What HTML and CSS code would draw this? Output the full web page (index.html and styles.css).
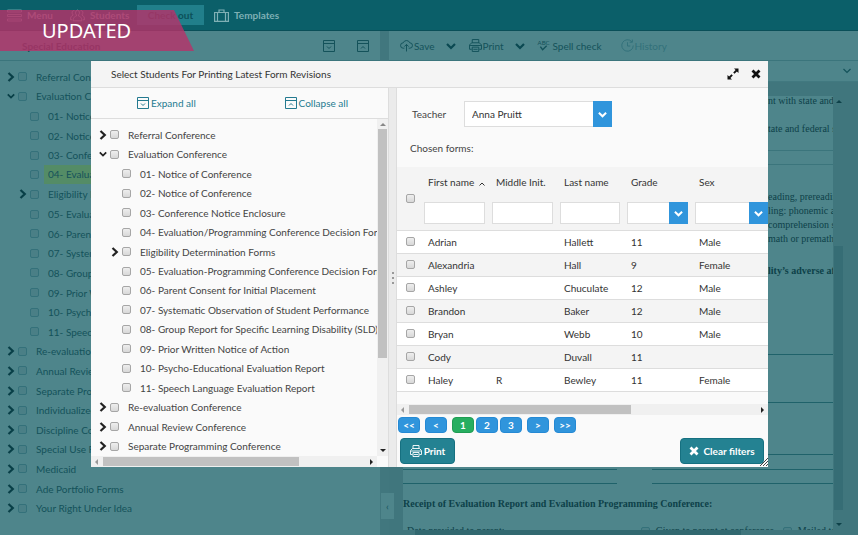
FILE: index.html
```html
<!DOCTYPE html>
<html lang="en">
<head>
<meta charset="utf-8">
<title>Special Education</title>
<link rel="stylesheet" href="styles.css">
</head>
<body>
<svg class="sprite" aria-hidden="true">
  <symbol id="right" viewBox="0 0 8 10"><path d="M1.5 1 5.8 5 1.5 9" fill="none" stroke="currentColor" stroke-width="2.2"/></symbol>
  <symbol id="down" viewBox="0 0 10 8"><path d="M1 2 5 6 9 2" fill="none" stroke="currentColor" stroke-width="2.2"/></symbol>
  <symbol id="thin-down" viewBox="0 0 10 8"><path d="M1.5 2 5 5.5 8.5 2" fill="none" stroke="currentColor" stroke-width="1.2"/></symbol>
  <symbol id="box-down" viewBox="0 0 12 12"><path d="M.5.5h11v11H.5zM.5 3.5h11M4 6.5l2 2 2-2" fill="none" stroke="currentColor"/></symbol>
  <symbol id="box-up" viewBox="0 0 12 12"><path d="M.5.5h11v11H.5zM.5 3.5h11M4 8.500l2-2 2 2" fill="none" stroke="currentColor"/></symbol>
  <symbol id="printer" viewBox="0 0 12 12"><path d="M3 3.500v-3h6v3M2.500 9.500h-2v-4l2-2h7l2 2v4h-2M1 6h10M3 7.500h6v4H3zM4 9.500h4" fill="none" stroke="currentColor" stroke-width=".9"/></symbol>
  <symbol id="cloud" viewBox="0 0 12 12"><path d="M4 8.500H3a2.500 2.500 0 0 1 0-5 3.200 3.200 0 0 1 6 0 2.500 2.500 0 0 1 0 5H8M6 11.500V5M4 7l2-2 2 2" fill="none" stroke="currentColor" stroke-width=".9"/></symbol>
  <symbol id="clock" viewBox="0 0 12 12"><path d="M10 2.500A5.300 5.300 0 1 0 11.300 6M10.500.5v2.500H8M6 3v3.500h2.500" fill="none" stroke="currentColor" stroke-width=".9"/></symbol>
  <symbol id="cross" viewBox="0 0 10 10"><path d="M1.500 1.500l7 7M8.500 1.500l-7 7" fill="none" stroke="currentColor" stroke-width="2.800"/></symbol>
  <symbol id="expand" viewBox="0 0 12 12"><path d="M7 .5h4.500V5L9.900 3.400 7.500 5.800 6.200 4.500 8.600 2.100zM5 11.500H.5V7l1.600 1.600 2.400-2.400 1.300 1.300-2.400 2.400z" fill="currentColor"/></symbol>
  <symbol id="menu" viewBox="0 0 15 13"><path d="M.5 1h14v2H.5zM.5 5.500h14v2H.5zM.5 10h14v2H.5z" fill="none" stroke="currentColor" stroke-width=".8"/></symbol>
  <symbol id="people" viewBox="0 0 14 12"><path d="M7 1a2 2.500 0 0 1 1 4.500v1c1.500.6 3 1 3 4.500H3c0-3.500 1.500-3.900 3-4.500v-1A2 2.500 0 0 1 7 1zM4 1.500C1.500 1 1.500 4.500 3 5.500 1 6.500.5 7.500.5 10H2M10 1.500c2.500-.5 2.500 3 1 4 2 1 2.500 2 2.500 4.500H12" fill="none" stroke="currentColor" stroke-width=".9"/></symbol>
  <symbol id="case" viewBox="0 0 15 13"><path d="M.6 3.500H14.400v8.900H.6zM5 3.500V1h5v2.500M3.500 3.500v9M11.500 3.500v9" fill="none" stroke="currentColor" stroke-width="1.200"/></symbol>
  <symbol id="tick" viewBox="0 0 10 6"><path d="M1.500 1.500 4 4.800 8.500.5" fill="none" stroke="currentColor" stroke-width="1.500"/></symbol>
</svg>

<div class="app">
  <nav class="topbar">
    <a class="nav menu" href="#"><svg class="i15"><use href="#menu"/></svg>Menu</a>
    <a class="nav students" href="#"><svg class="i15"><use href="#people"/></svg>Students</a>
    <a class="nav current" href="#">Check out</a>
    <a class="nav" href="#"><svg class="i15"><use href="#case"/></svg>Templates</a>
  </nav>
  <div class="workspace">
    <aside class="side">
      <header class="side-head">
        <h2>Special Education</h2>
        <button class="plain" aria-label="Expand all"><svg class="i12"><use href="#box-down"/></svg></button>
        <button class="plain" aria-label="Collapse all"><svg class="i12"><use href="#box-up"/></svg></button>
      </header>
      <ul class="tree">
        <li><svg class="tw"><use href="#right"/></svg><label><input type="checkbox"><span>Referral Conference</span></label></li>
        <li><svg class="tw"><use href="#down"/></svg><label><input type="checkbox"><span>Evaluation Conference</span></label></li>
        <li class="sub"><label><input type="checkbox"><span>01- Notice of Conference</span></label></li>
        <li class="sub"><label><input type="checkbox"><span>02- Notice of Conference</span></label></li>
        <li class="sub"><label><input type="checkbox"><span>03- Conference Notice</span></label></li>
        <li class="sub marked"><label><input type="checkbox"><span>04- Evaluation</span></label></li>
        <li class="sub"><svg class="tw"><use href="#right"/></svg><label><input type="checkbox"><span>Eligibility Forms</span></label></li>
        <li class="sub"><label><input type="checkbox"><span>05- Evaluation</span></label></li>
        <li class="sub"><label><input type="checkbox"><span>06- Parent Consent</span></label></li>
        <li class="sub"><label><input type="checkbox"><span>07- Systematic</span></label></li>
        <li class="sub"><label><input type="checkbox"><span>08- Group Report</span></label></li>
        <li class="sub"><label><input type="checkbox"><span>09- Prior Written</span></label></li>
        <li class="sub"><label><input type="checkbox"><span>10- Psycho-Educational</span></label></li>
        <li class="sub"><label><input type="checkbox"><span>11- Speech Language</span></label></li>
        <li><svg class="tw"><use href="#right"/></svg><label><input type="checkbox"><span>Re-evaluation</span></label></li>
        <li><svg class="tw"><use href="#right"/></svg><label><input type="checkbox"><span>Annual Review</span></label></li>
        <li><svg class="tw"><use href="#right"/></svg><label><input type="checkbox"><span>Separate Programming</span></label></li>
        <li><svg class="tw"><use href="#right"/></svg><label><input type="checkbox"><span>Individualized</span></label></li>
        <li><svg class="tw"><use href="#right"/></svg><label><input type="checkbox"><span>Discipline Conference</span></label></li>
        <li><svg class="tw"><use href="#right"/></svg><label><input type="checkbox"><span>Special Use Forms</span></label></li>
        <li><svg class="tw"><use href="#right"/></svg><label><input type="checkbox"><span>Medicaid</span></label></li>
        <li><svg class="tw"><use href="#right"/></svg><label><input type="checkbox"><span>Ade Portfolio Forms</span></label></li>
        <li><svg class="tw"><use href="#right"/></svg><label><input type="checkbox"><span>Your Right Under Idea</span></label></li>
      </ul>
    </aside>
    <div class="gutter"><button class="handle" aria-label="Hide panel">‹</button></div>
    <main class="editor">
      <div class="tools">
        <button class="plain save"><svg class="i13"><use href="#cloud"/></svg>Save</button>
        <button class="plain drop" aria-label="Save options"><svg class="i10"><use href="#down"/></svg></button>
        <button class="plain"><svg class="i13"><use href="#printer"/></svg>Print</button>
        <button class="plain drop" aria-label="Print options"><svg class="i10"><use href="#down"/></svg></button>
        <button class="plain spell"><span class="abc">ABC<svg><use href="#tick"/></svg></span>Spell check</button>
        <button class="plain faint"><svg class="i13"><use href="#clock"/></svg>History</button>
      </div>
      <div class="formbar"><svg class="i10"><use href="#thin-down"/></svg></div>
      <div class="canvas">
        <div class="page">
          <p class="edge first">nt with state and</p>
          <p class="edge second">tate and federal s</p>
          <hr class="light"><hr class="light near">
          <div class="skills">
            <p class="edge">eading, prereading</p>
            <p class="edge">ling: phonemic aw</p>
            <p class="edge">comprehension sk</p>
            <p class="edge">math or premath sk</p>
          </div>
          <p class="edge adverse">lity’s adverse affect</p>
          <hr class="r1"><hr class="r2"><hr class="r3">
          <div class="sign"><hr><hr></div>
          <div class="sign"><hr><hr></div>
          <h3>Receipt of Evaluation Report and Evaluation Programming Conference:</h3>
          <div class="receipt">
            <span>Date provided to parent:</span>
            <label><input type="checkbox">Given to parent at conference</label>
            <label><input type="checkbox">Mailed to</label>
          </div>
        </div>
        <div class="page-bar"><i class="up"></i><b></b><i class="dn"></i></div>
        <div class="page-hbar"><b></b></div>
      </div>
    </main>
  </div>
</div>

<div class="ribbon">UPDATED</div>

<div class="overlay">
  <section class="dialog" role="dialog" aria-labelledby="dlg">
    <header class="dialog-head">
      <h1 id="dlg">Select Students For Printing Latest Form Revisions</h1>
      <button class="plain" aria-label="Maximize"><svg class="i12"><use href="#expand"/></svg></button>
      <button class="plain" aria-label="Close"><svg class="i10"><use href="#cross"/></svg></button>
    </header>
    <div class="dialog-body">
      <div class="forms">
        <div class="forms-tools">
          <button class="plain"><svg class="i12"><use href="#box-down"/></svg>Expand all</button>
          <button class="plain"><svg class="i12"><use href="#box-up"/></svg>Collapse all</button>
        </div>
        <div class="forms-scroll">
          <ul class="tree">
            <li><svg class="tw"><use href="#right"/></svg><label><input type="checkbox"><span>Referral Conference</span></label></li>
            <li><svg class="tw"><use href="#down"/></svg><label><input type="checkbox"><span>Evaluation Conference</span></label></li>
            <li class="sub"><label><input type="checkbox"><span>01- Notice of Conference</span></label></li>
            <li class="sub"><label><input type="checkbox"><span>02- Notice of Conference</span></label></li>
            <li class="sub"><label><input type="checkbox"><span>03- Conference Notice Enclosure</span></label></li>
            <li class="sub"><label><input type="checkbox"><span>04- Evaluation/Programming Conference Decision Form</span></label></li>
            <li class="sub"><svg class="tw"><use href="#right"/></svg><label><input type="checkbox"><span>Eligibility Determination Forms</span></label></li>
            <li class="sub"><label><input type="checkbox"><span>05- Evaluation-Programming Conference Decision Form</span></label></li>
            <li class="sub"><label><input type="checkbox"><span>06- Parent Consent for Initial Placement</span></label></li>
            <li class="sub"><label><input type="checkbox"><span>07- Systematic Observation of Student Performance</span></label></li>
            <li class="sub"><label><input type="checkbox"><span>08- Group Report for Specific Learning Disability (SLD)</span></label></li>
            <li class="sub"><label><input type="checkbox"><span>09- Prior Written Notice of Action</span></label></li>
            <li class="sub"><label><input type="checkbox"><span>10- Psycho-Educational Evaluation Report</span></label></li>
            <li class="sub"><label><input type="checkbox"><span>11- Speech Language Evaluation Report</span></label></li>
            <li><svg class="tw"><use href="#right"/></svg><label><input type="checkbox"><span>Re-evaluation Conference</span></label></li>
            <li><svg class="tw"><use href="#right"/></svg><label><input type="checkbox"><span>Annual Review Conference</span></label></li>
            <li><svg class="tw"><use href="#right"/></svg><label><input type="checkbox"><span>Separate Programming Conference</span></label></li>
          </ul>
          <div class="vbar"><i class="up"></i><b></b><i class="dn"></i></div>
        </div>
        <div class="hbar"><i class="lf"></i><b></b><i class="rt"></i></div>
      </div>
      <div class="splitter"><i></i><i></i><i></i></div>
      <div class="students-pane">
        <div class="teacher">
          <label for="teacher">Teacher</label>
          <span class="pick"><select id="teacher"><option>Anna Pruitt</option></select><svg><use href="#down"/></svg></span>
        </div>
        <p class="chosen">Chosen forms:</p>
        <div class="grid">
          <table>
            <colgroup><col class="c0"><col class="cb"><col class="cb"><col class="ca"><col class="cb"><col></colgroup>
            <thead>
              <tr>
                <th><input type="checkbox" aria-label="Select all"></th>
                <th><label for="f1">First name <svg class="sort" viewBox="0 0 6 4"><path d="M.5 3.500 3 1l2.500 2.500" fill="none" stroke="currentColor"/></svg></label><input type="text" id="f1"></th>
                <th><label for="f2">Middle Init.</label><input type="text" id="f2"></th>
                <th><label for="f3">Last name</label><input type="text" id="f3"></th>
                <th><label for="f4">Grade</label><span class="pick"><select id="f4"><option></option></select><svg><use href="#down"/></svg></span></th>
                <th class="last"><label for="f5">Sex</label><span class="pick"><select id="f5"><option></option></select><svg><use href="#down"/></svg></span></th>
              </tr>
            </thead>
            <tbody>
              <tr><td><input type="checkbox" aria-label="Adrian Hallett"></td><td>Adrian</td><td></td><td>Hallett</td><td>11</td><td>Male</td></tr>
              <tr><td><input type="checkbox" aria-label="Alexandria Hall"></td><td>Alexandria</td><td></td><td>Hall</td><td>9</td><td>Female</td></tr>
              <tr><td><input type="checkbox" aria-label="Ashley Chuculate"></td><td>Ashley</td><td></td><td>Chuculate</td><td>12</td><td>Male</td></tr>
              <tr><td><input type="checkbox" aria-label="Brandon Baker"></td><td>Brandon</td><td></td><td>Baker</td><td>12</td><td>Male</td></tr>
              <tr><td><input type="checkbox" aria-label="Bryan Webb"></td><td>Bryan</td><td></td><td>Webb</td><td>10</td><td>Male</td></tr>
              <tr><td><input type="checkbox" aria-label="Cody Duvall"></td><td>Cody</td><td></td><td>Duvall</td><td>11</td><td></td></tr>
              <tr><td><input type="checkbox" aria-label="Haley Bewley"></td><td>Haley</td><td>R</td><td>Bewley</td><td>11</td><td>Female</td></tr>
            </tbody>
          </table>
        </div>
        <div class="hbar wide"><i class="lf"></i><b></b><i class="rt"></i></div>
        <div class="pager">
          <button>&lt;&lt;</button><button>&lt;</button>
          <span class="numbers"><button class="on">1</button><button>2</button><button>3</button></span>
          <button>&gt;</button><button>&gt;&gt;</button>
        </div>
        <footer class="actions">
          <button class="action"><svg class="i12"><use href="#printer"/></svg>Print</button>
          <button class="action clear"><svg class="i10"><use href="#cross"/></svg>Clear filters</button>
        </footer>
      </div>
    </div>
    <svg class="grip" viewBox="0 0 8 8"><path d="M0 8 8 0M3 8l5-5M6 8l2-2" stroke="#444" fill="none"/></svg>
  </section>
</div>
</body>
</html>
```
FILE: styles.css
```css
* { box-sizing: border-box; }
html, body { height: 100%; margin: 0; overflow: hidden; }
body { font: 10px/14px Lato, "Open Sans", sans-serif; color: #444; background: #4e858b; }
h1, h2, h3, p, ul { margin: 0; padding: 0; font-size: inherit; font-weight: inherit; }
ul { list-style: none; }
a { color: inherit; text-decoration: none; }
button, input, select { font: inherit; color: inherit; margin: 0; }
hr { border: 0; height: 1px; margin: 0; background: #1f626a; }
svg { flex: none; display: block; }
.sprite { position: absolute; width: 0; height: 0; }
.i10 { width: 10px; height: 10px; }
.i12 { width: 12px; height: 12px; }
.i13 { width: 13px; height: 13px; }
.i15 { width: 15px; height: 13px; }
.plain { display: flex; align-items: center; gap: 1px; padding: 0; border: 0; background: none; white-space: nowrap; }
input[type=checkbox] {
  appearance: none; flex: none; width: 9px; height: 9px;
  border: 1px solid #a6a6a6; border-radius: 2px;
  background: linear-gradient(#eee, #d8d8d8);
}

/* Application behind the dialog */
.app { height: 100%; display: flex; flex-direction: column; color: #14525a; }
.app input[type=checkbox] { border-color: #34717a; background: #4a7f86; }
.topbar { flex: none; height: 31px; display: flex; align-items: center; padding-left: 7px; background: #0b5f69; border-bottom: 1px solid #0a4f58; color: #7fb0b5; font-weight: bold; }
.nav { display: flex; align-items: center; gap: 5px; }
.menu { width: 63px; }
.students { width: 67px; }
.current { height: 20px; width: 67px; justify-content: center; margin-right: 10px; background: #217f8b; color: #0b5059; }
.workspace { flex: 1; min-height: 0; display: flex; }
.side { flex: 0 0 380px; display: flex; flex-direction: column; min-width: 0; background: #4e858b; }
.side-head { flex: none; height: 30px; display: flex; align-items: center; gap: 22px; padding: 0 11px 0 22px; border-bottom: 1px solid #3b757c; }
.side-head h2 { flex: 1; font-weight: bold; color: #0d4951; }
.side .tree { padding: 6px 0 17px 7px; }
.tree { flex: 1; min-width: 0; min-height: 0; display: flex; flex-direction: column; overflow: hidden; }
.tree li { flex: 1; min-height: 0; display: flex; align-items: center; padding-left: 11px; white-space: nowrap; }
.tree .tw { width: 8px; height: 10px; margin: 0 3px 0 -11px; color: #222; }
.tree .sub { padding-left: 23px; }
.tree label { display: flex; align-items: center; gap: 9px; }
.tree label span { padding-left: 4px; margin-left: -4px; }
.app .tree .tw { color: #083f47; }
.marked label span { background: #548c66; line-height: 19px; }
.gutter { flex: 0 0 9px; position: relative; background: #41777e; }
.handle { position: absolute; left: 1px; bottom: 16px; width: 13px; height: 26px; padding: 0; border: 0; background: #4e858b; z-index: 1; }
.editor { flex: 1; min-width: 0; display: flex; flex-direction: column; background: #4e858b; }
.tools { flex: none; height: 30px; display: flex; align-items: center; padding-left: 11px; border-bottom: 1px solid #3b757c; }
.drop { margin: 0 13px 0 11px; color: #0a4851; }
.spell { gap: 3px; }
.abc { display: flex; flex-direction: column; align-items: center; font-size: 6px; line-height: 5px; }
.abc svg { width: 9px; height: 6px; }
.faint { margin-left: 19px; color: #32717a; }
.formbar { flex: none; height: 21px; display: flex; align-items: center; justify-content: flex-end; padding-right: 6px; border-bottom: 1px solid #417980; }
.canvas { flex: 1; min-height: 0; display: grid; grid-template: 1fr 5px / 1fr 11px; padding: 14px 14px 0; background: #40767d; }
.page { min-width: 0; min-height: 0; overflow: hidden; background: #4e858b; color: #0d4149; font: 10px/14px "Liberation Serif", serif; }
.edge { width: 65px; margin-left: auto; overflow: hidden; white-space: nowrap; }
.first { margin-top: -2px; }
.second { margin-top: 14px; }
hr.light { margin-top: 14px; background: #3b757c; }
hr.near { margin-top: 13px; }
.skills { margin-top: 25px; }
.adverse, .page h3 { font-weight: bold; }
.adverse { margin-top: 18px; }
.r1 { margin-top: 76px; }
.r2 { margin-top: 47px; }
.r3 { margin-top: 51px; }
.sign { display: grid; grid-template-columns: 214fr 181fr; gap: 35px; margin-top: 14px; }
.sign + .sign { margin-top: 13px; }
.page h3 { margin-top: 13px; }
.receipt { display: grid; grid-template-columns: 232fr 141fr 50fr; margin-top: 13px; padding-left: 4px; white-space: nowrap; }
.receipt label { display: flex; align-items: center; gap: 6px; min-width: 0; overflow: hidden; }
.page-bar { display: flex; flex-direction: column; align-items: center; padding: 4px 0; }
.page-bar b { width: 9px; height: 264px; margin-top: auto; margin-bottom: 13px; background: #366d75; }
.page-hbar { padding-left: 12px; }
.page-hbar b { display: block; width: 78%; height: 5px; background: #316870; }

.ribbon { position: absolute; left: 0; top: 10px; width: 194px; padding: 9px 0 8px 42px; background: rgba(185, 49, 105, .8); clip-path: polygon(0 0, 174px 0, 100% 100%, 0 100%); color: #fff; font: 20px/24px "Noto Sans", sans-serif; }

/* Dialog */
.overlay { position: absolute; inset: 0; display: flex; padding: 61px 90px 68px 91px; }
.dialog { position: relative; flex: 1; min-width: 0; display: flex; flex-direction: column; background: #fafafa; }
.dialog-head { flex: none; height: 27px; display: flex; align-items: center; gap: 12px; padding: 0 7px 0 20px; background: #f4f4f4; border-bottom: 1px solid #ddd; color: #333; }
.dialog-head h1 { flex: 1; }
.dialog-head button { color: #111; }
.dialog-body { flex: 1; min-height: 0; display: flex; }
.forms { flex: 0 0 297px; min-width: 0; display: flex; flex-direction: column; }
.forms-tools { flex: none; height: 31px; display: flex; align-items: center; justify-content: space-between; padding: 0 40px 0 46px; border-bottom: 1px solid #ddd; color: #247a90; }
.forms-tools .plain { gap: 2px; }
.forms-scroll { flex: 1; min-height: 0; display: flex; }
.forms .tree { padding: 6px 0 0 8px; }
.vbar { flex: 0 0 11px; display: flex; flex-direction: column; align-items: center; padding: 4px 0; background: #f0f0f0; }
.vbar b { width: 9px; height: 229px; margin: 3px 0 auto; background: #c1c1c1; }
i { display: block; width: 0; height: 0; border: 3px solid transparent; }
.up { border-width: 0 3px 3px; border-bottom-color: #888; }
.dn { border-width: 3px 3px 0; border-top-color: #222; }
.lf { border-width: 3px 3px 3px 0; border-right-color: #999; }
.rt { border-width: 3px 0 3px 3px; border-left-color: #222; }
.app .up { border-bottom-color: #0d4149; }
.app .dn { border-top-color: #0d4149; }
.hbar { flex: none; height: 11px; margin-right: 11px; display: flex; align-items: center; padding: 0 4px; background: #f0f0f0; }
.hbar b { width: 196px; height: 9px; margin: 0 auto 0 5px; background: #c1c1c1; }
.hbar.wide { margin: 0; }
.hbar.wide b { width: 222px; }
.splitter { flex: 0 0 9px; display: flex; flex-direction: column; align-items: center; justify-content: center; gap: 3px; background: #ebebeb; border: solid #ddd; border-width: 0 1px; }
.splitter i { width: 2px; height: 2px; border: 0; background: #999; }
.students-pane { flex: 1; min-width: 0; display: flex; flex-direction: column; }
.teacher { display: flex; align-items: center; padding: 13px 0 0 15px; }
.teacher label { width: 52px; }
.pick { position: relative; display: block; }
.pick select { appearance: none; display: block; width: 100%; height: 22px; padding: 0 7px; border: 1px solid #ddd; border-radius: 0; background: #fff; color: #333; }
.pick svg { position: absolute; right: 0; top: 0; width: 19px; height: 100%; padding: 6px 5px 5px; background: #3095dc; color: #fff; pointer-events: none; }
.teacher .pick { width: 148px; }
.teacher .pick select { height: 26px; }
.chosen { padding: 14px 0 12px 13px; }
.grid { flex: 1; min-height: 0; overflow: hidden; }
table { width: 100%; table-layout: fixed; border-collapse: collapse; color: #333; }
.c0 { width: 24px; }
.ca { width: 67px; }
.cb { width: 68px; }
th { height: 63px; padding: 8px 4px 0 3px; font-weight: normal; text-align: left; vertical-align: top; background: #f4f4f4; border-bottom: 1px solid #ddd; }
th label { display: block; padding-left: 4px; margin-bottom: 12px; line-height: 15px; white-space: nowrap; }
th input[type=text] { display: block; width: 100%; height: 22px; border: 1px solid #ddd; background: #fff; }
th.last { padding-right: 0; }
th:first-child { padding-top: 0; vertical-align: middle; }
th:first-child, td:first-child { padding-left: 9px; }
th input[type=checkbox], td input { display: block; }
.sort { display: inline-block; width: 6px; height: 4px; margin-left: 2px; }
td { height: 23px; padding: 0 0 0 7px; border-bottom: 1px solid #ddd; background: #fff; }
tr:nth-child(even) td { background: #f4f4f4; }
.pager { display: flex; gap: 5px; padding: 2px 1px 0; }
.pager button { width: 22px; height: 16px; padding: 0; border: 1px solid #2589d4; border-radius: 4px; background: #3095dc; color: #fff; font-weight: bold; line-height: 14px; }
.pager .on { background: #27ae60; border-color: #1f9c53; }
.numbers { display: flex; gap: 2px; }
.actions { display: flex; justify-content: space-between; padding: 5px 4px 3px 3px; }
.action { display: flex; align-items: center; justify-content: center; gap: 2px; width: 55px; height: 26px; padding: 0; border: 1px solid #167080; border-radius: 4px; background: #248292; color: #fff; font-weight: bold; }
.clear { width: 84px; gap: 4px; }
.grip { position: absolute; right: 0; bottom: 1px; width: 8px; height: 8px; }
```
